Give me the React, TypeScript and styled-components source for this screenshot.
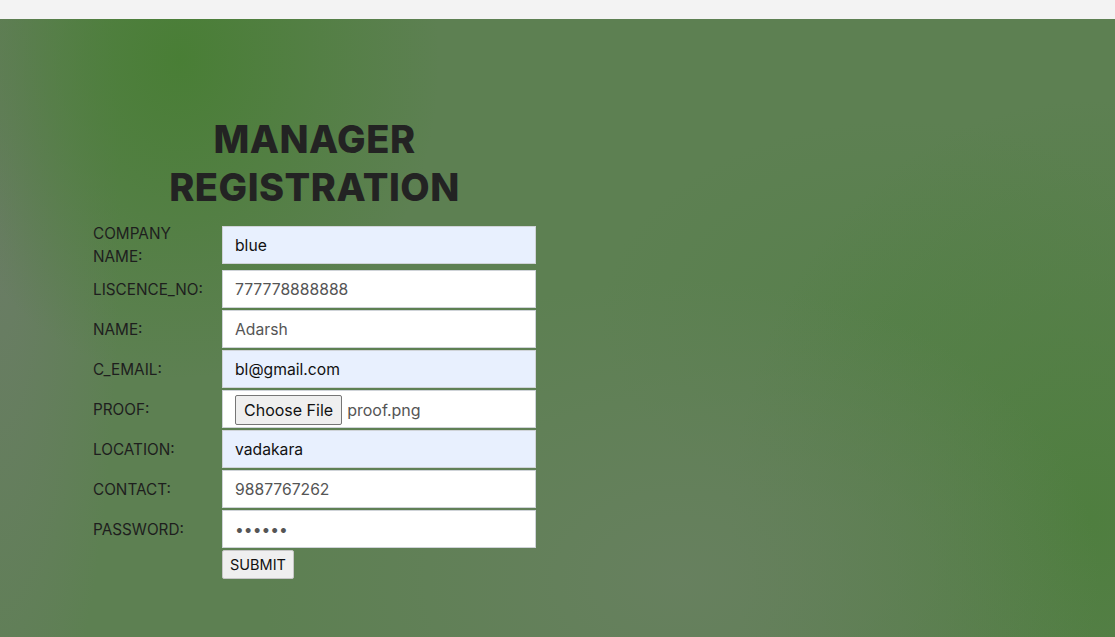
import React from "react";
import styled, { createGlobalStyle } from "styled-components";

const Global = createGlobalStyle`
  html, body { margin: 0; padding: 0; }
  body { font-family: "Inter", "Liberation Sans", sans-serif; background: #f3f3f3; }
`;

const TopBar = styled.div`
  height: 19px;
  background: #f3f3f3;
`;

const Hero = styled.main`
  min-height: 618px;
  box-sizing: border-box;
  padding: 96px 0 40px 93px;
  background:
    radial-gradient(ellipse 260px 320px at 180px 40px, rgba(72, 126, 52, 0.95), rgba(72, 126, 52, 0) 100%),
    radial-gradient(ellipse 120px 600px at 0px 200px, rgba(108, 124, 104, 0.9), rgba(108, 124, 104, 0) 100%),
    radial-gradient(ellipse 420px 300px at 680px 560px, rgba(104, 128, 96, 0.9), rgba(104, 128, 96, 0) 100%),
    radial-gradient(ellipse 360px 420px at 1090px 500px, rgba(78, 126, 62, 0.95), rgba(78, 126, 62, 0) 100%),
    radial-gradient(ellipse 300px 200px at 900px 300px, rgba(86, 128, 74, 0.7), rgba(86, 128, 74, 0) 100%),
    #5d8052;
`;

const FormBox = styled.form`
  width: 443px;
  display: flex;
  flex-direction: column;
`;

const Title = styled.h1`
  margin: 0 0 11px;
  text-align: center;
  font-family: "Inter", "Liberation Sans", sans-serif;
  font-weight: 800;
  font-size: 38px;
  line-height: 48px;
  color: #232323;
  letter-spacing: 0.5px;
`;

const Grid = styled.div`
  display: grid;
  grid-template-columns: 129px 314px;
  row-gap: 2px;
  align-items: center;
`;

const Label = styled.label`
  font-family: "Inter", "Liberation Sans", sans-serif;
  font-size: 15.3px;
  line-height: 23px;
  color: #1e1e1e;
  padding-right: 4px;
`;

const Field = styled.input<{ $filled?: boolean }>`
  box-sizing: border-box;
  width: 314px;
  height: 38px;
  margin: 0;
  padding: 0 12px;
  border: 1px solid #cfd3d8;
  background: ${(p) => (p.$filled ? "#e8f0fe" : "#ffffff")};
  color: ${(p) => (p.$filled ? "#111" : "#555")};
  font-family: "Inter", "Liberation Sans", sans-serif;
  font-size: 15.7px;
  outline: none;
`;

const FileBox = styled.div`
  box-sizing: border-box;
  width: 314px;
  height: 38px;
  border: 1px solid #cfd3d8;
  background: #fff;
  display: flex;
  align-items: center;
  padding: 2px 12px 0;
  gap: 5px;
`;

const FileButton = styled.span`
  box-sizing: border-box;
  height: 30px;
  padding: 0 8px;
  display: flex;
  align-items: center;
  background: #efefef;
  border: 1px solid #767676;
  border-radius: 2px;
  color: #111;
  font-family: "Inter", "Liberation Sans", sans-serif;
  font-size: 16px;
`;

const FileName = styled.span`
  color: #555;
  font-family: "Inter", "Liberation Sans", sans-serif;
  font-size: 16px;
`;

const Submit = styled.button`
  justify-self: start;
  margin-top: 0;
  height: 29px;
  padding: 0 7px;
  background: #efefef;
  border: 1px solid #c6c6c6;
  border-radius: 2px;
  color: #111;
  font-family: "Inter", "Liberation Sans", sans-serif;
  font-size: 14.5px;
`;

const Spacer = styled.div``;

const FirstRow = styled.div`
  height: 46px;
  display: flex;
  align-items: center;
`;

type Row = { label: string; value: string; filled?: boolean; type?: string };

const rows: Row[] = [
  { label: "LISCENCE_NO:", value: "777778888888" },
  { label: "NAME:", value: "Adarsh" },
  { label: "C_EMAIL:", value: "bl@gmail.com", filled: true },
];

const rows2: Row[] = [
  { label: "LOCATION:", value: "vadakara", filled: true },
  { label: "CONTACT:", value: "9887767262" },
  { label: "PASSWORD:", value: "abcdef", type: "password" },
];

function FieldRows({ items }: { items: Row[] }) {
  return (
    <>
      {items.map((r) => (
        <React.Fragment key={r.label}>
          <Label>{r.label}</Label>
          <Field $filled={r.filled} readOnly value={r.value} type={r.type || "text"} />
        </React.Fragment>
      ))}
    </>
  );
}

export default function App() {
  return (
    <>
      <Global />
      <TopBar />
      <Hero>
        <FormBox onSubmit={(e) => e.preventDefault()}>
          <Title>
            MANAGER
            <br />
            REGISTRATION
          </Title>
          <Grid>
            <FirstRow>
              <Label>
                COMPANY
                <br />
                NAME:
              </Label>
            </FirstRow>
            <Field $filled readOnly value="blue" />
            <FieldRows items={rows} />
            <Label>PROOF:</Label>
            <FileBox>
              <FileButton>Choose File</FileButton>
              <FileName>proof.png</FileName>
            </FileBox>
            <FieldRows items={rows2} />
            <Spacer />
            <Submit type="submit">SUBMIT</Submit>
          </Grid>
        </FormBox>
      </Hero>
    </>
  );
}
